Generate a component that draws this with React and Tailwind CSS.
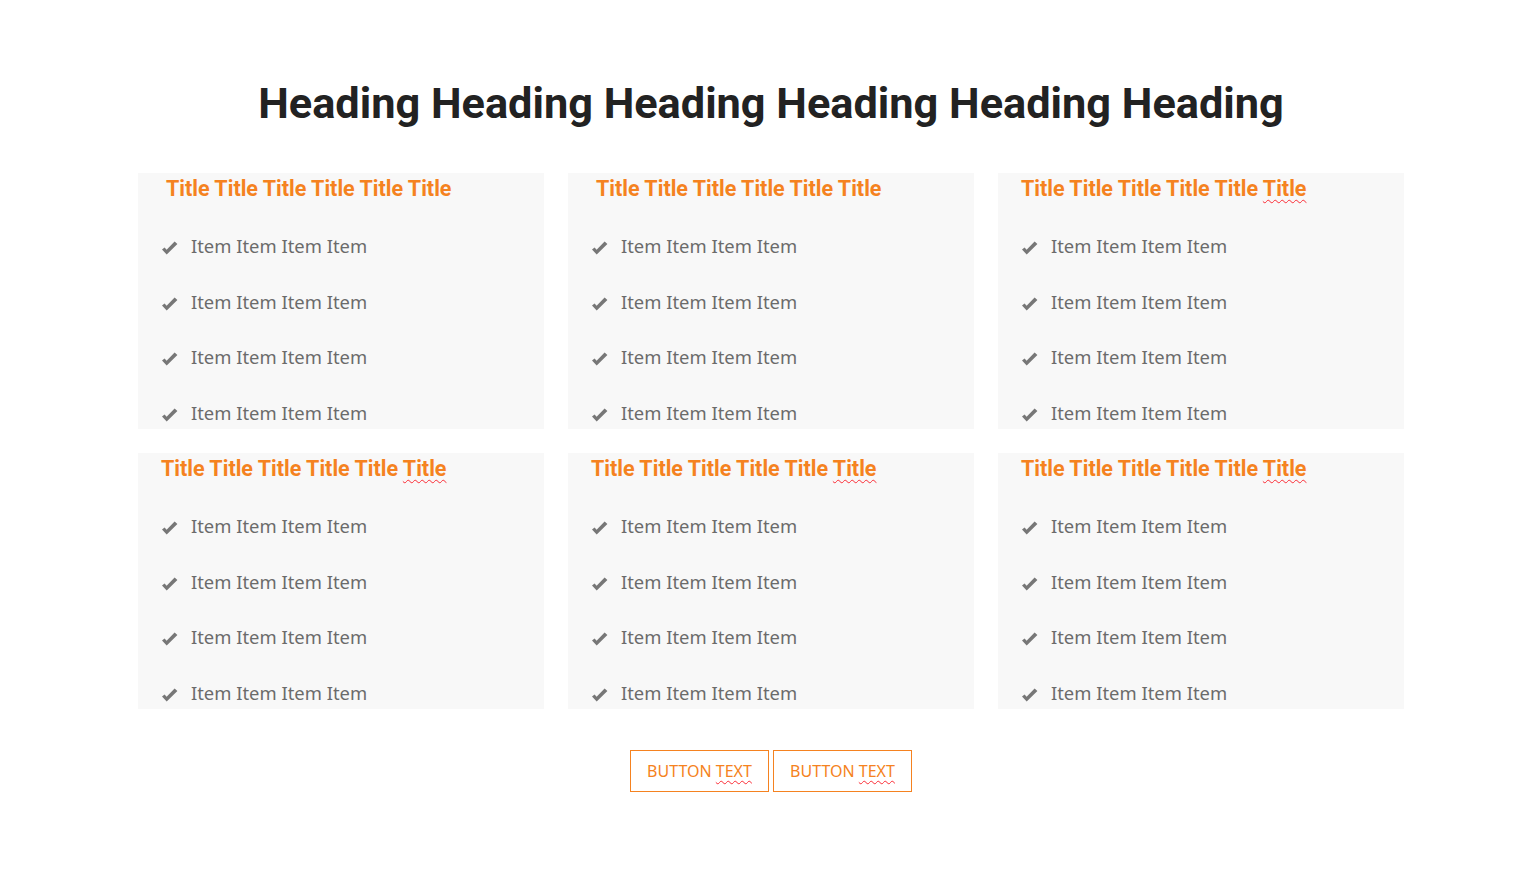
const cards = [
  { pad: "pl-[28px]", squiggle: false },
  { pad: "pl-[28px]", squiggle: false },
  { pad: "pl-[23px]", squiggle: true },
  { pad: "pl-[23px]", squiggle: true },
  { pad: "pl-[23px]", squiggle: true },
  { pad: "pl-[23px]", squiggle: true },
];

const squiggle = "underline decoration-wavy decoration-red-500 decoration-1 underline-offset-[3px]";

function Check() {
  return (
    <svg width="17" height="14" viewBox="0 0 17 14" className="mr-[13px] translate-y-[2px]">
      <path
        d="M1 8.6 L3.6 6.4 L5.6 8.8 L13.6 0.6 L16.4 3 L5.7 13.6 Z"
        fill="#777"
      />
    </svg>
  );
}

function Card({ pad, squiggle: sq }) {
  return (
    <div className="bg-[#f8f8f8] h-[256px] overflow-hidden">
      <h3
        className={`${pad} text-[21.5px] leading-[32px] font-bold text-[#f58220] font-['Roboto',sans-serif]`}
      >
        Title Title Title Title Title <span className={sq ? squiggle : ""}>Title</span>
      </h3>
      <ul className="mt-[27px] pl-[23px] flex flex-col gap-[27.5px]">
        {[0, 1, 2, 3].map((i) => (
          <li key={i} className="flex items-center h-[28px]">
            <Check />
            <span className="text-[18.4px] text-[#6b6b6b] font-['Noto_Sans',sans-serif]">
              Item Item Item Item
            </span>
          </li>
        ))}
      </ul>
    </div>
  );
}

export default function App() {
  return (
    <div className="min-h-screen bg-white pl-[5px] pt-[78px]">
      <h1 className="text-center text-[43.3px] leading-[52px] font-bold text-[#222] font-['Roboto',sans-serif]">
        Heading Heading Heading Heading Heading Heading
      </h1>
      <div className="mx-auto mt-[43px] w-[1266px] grid grid-cols-3 gap-[24px]">
        {cards.map((c, i) => (
          <Card key={i} {...c} />
        ))}
      </div>
      <div className="mt-[41px] flex justify-center gap-[4px]">
        {[0, 1].map((i) => (
          <button
            key={i}
            className="w-[139px] h-[42px] border border-[#f58220] text-[#f58220] text-[16px] font-['Noto_Sans',sans-serif]"
          >
            BUTTON <span className={squiggle}>TEXT</span>
          </button>
        ))}
      </div>
    </div>
  );
}
